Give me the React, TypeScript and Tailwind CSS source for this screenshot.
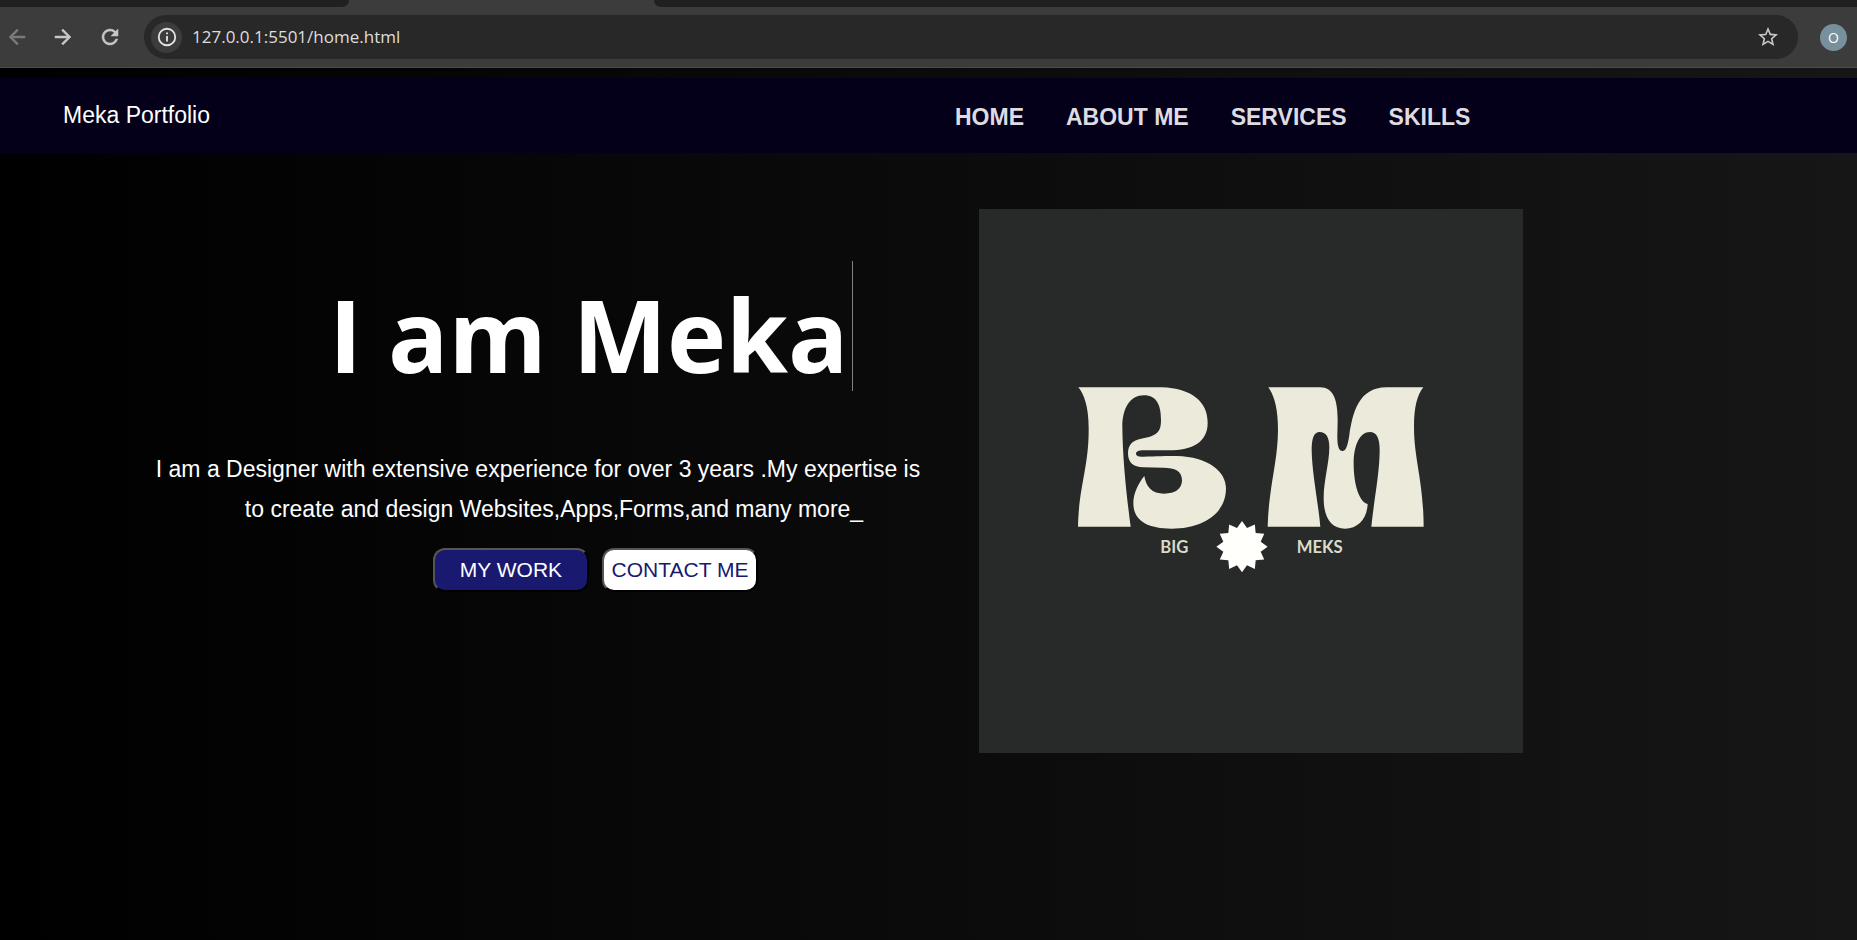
import React from "react";

const navLinks = ["HOME", "ABOUT ME", "SERVICES", "SKILLS"];

const starPoints = Array.from({ length: 24 }, (_, i) => {
  const radius = i % 2 === 0 ? 77 : 58;
  const angle = (i * Math.PI) / 12;
  return `${789 + radius * Math.sin(angle)},${1013 - radius * Math.cos(angle)}`;
}).join(" ");

function BrowserBar() {
  return (
    <header className="bg-[#3c3c3c] font-['Open_Sans','Noto_Sans',sans-serif]">
      <div className="flex h-[7px] justify-between">
        <div className="w-[349px] rounded-br-[14px] bg-[#1f2120]" />
        <div className="ml-[305px] flex-1 rounded-bl-[14px] bg-[#1f2120]" />
      </div>
      <div className="flex h-[61px] items-center border-b border-[#4a4a4a] pt-2 pr-[10px] pb-2">
        <button type="button" aria-label="Back" className="ml-[5px] flex size-6 items-center justify-center text-[#7b7b7b]">
          <svg viewBox="0 0 24 24" className="size-6" fill="currentColor" stroke="currentColor" strokeWidth="0.5">
            <path d="M20 11H7.83l5.59-5.59L12 4l-8 8 8 8 1.41-1.41L7.83 13H20v-2z" />
          </svg>
        </button>
        <button type="button" aria-label="Forward" className="ml-[22px] flex size-6 items-center justify-center text-[#c7c7c7]">
          <svg viewBox="0 0 24 24" className="size-6" fill="currentColor" stroke="currentColor" strokeWidth="0.5">
            <path d="m12 4-1.41 1.41L16.17 11H4v2h12.17l-5.58 5.59L12 20l8-8z" />
          </svg>
        </button>
        <button type="button" aria-label="Reload" className="ml-[23px] flex size-6 items-center justify-center text-[#c7c7c7]">
          <svg viewBox="0 0 24 24" className="size-6" fill="currentColor" stroke="currentColor" strokeWidth="0.5">
            <path d="M17.65 6.35A7.96 7.96 0 0 0 12 4a8 8 0 1 0 7.73 10h-2.08A6 6 0 1 1 12 6c1.66 0 3.14.69 4.22 1.78L13 11h7V4z" />
          </svg>
        </button>
        <div className="ml-[22px] flex h-11 flex-1 items-center rounded-full bg-[#282828] pr-[18px] pl-[7px]">
          <button type="button" aria-label="Site information" className="flex size-[31px] items-center justify-center rounded-full bg-[#3c3c3c] text-[#e3e3e3]">
            <svg viewBox="0 0 24 24" className="size-[22px]" fill="currentColor">
              <path d="M11 7h2v2h-2zm0 4h2v6h-2zm1-9a10 10 0 1 0 0 20 10 10 0 0 0 0-20m0 18a8 8 0 1 1 0-16 8 8 0 0 1 0 16" />
            </svg>
          </button>
          <input
            aria-label="Address"
            className="ml-[10px] min-w-0 flex-1 bg-transparent text-[17px] text-[#dedede] outline-none"
            defaultValue="127.0.0.1:5501/home.html"
          />
          <button type="button" aria-label="Bookmark this page" className="flex size-6 items-center justify-center text-[#c7c7c7]">
            <svg viewBox="0 0 24 24" className="size-6" fill="currentColor">
              <path d="M22 9.24l-7.19-.62L12 2 9.19 8.63 2 9.24l5.46 4.73L5.82 21 12 17.27 18.18 21l-1.63-7.03zM12 15.4l-3.76 2.27 1-4.28-3.32-2.88 4.38-.38L12 6.1l1.71 4.04 4.38.38-3.32 2.88 1 4.28z" />
            </svg>
          </button>
        </div>
        <button type="button" aria-label="Profile" className="ml-[22px] flex size-[27px] items-center justify-center rounded-full bg-[#78909c] text-[14px] text-white">
          O
        </button>
      </div>
    </header>
  );
}

function Logo() {
  return (
    <svg viewBox="0 0 1632 1632" role="img" aria-label="Big Meks logo" className="aspect-square w-full max-w-[544px] bg-[#282a29]">
      <g fill="#ebeadb">
        <path
          transform="translate(243 483)"
          d="M55 52H305C395 55 443 95 443 158C443 215 400 241 325 241H250C235 241 228 246 228 251C228 258 236 261 250 260C290 259 320 258 350 258C445 260 498 305 498 355C498 430 430 476 335 476C260 476 220 450 220 400C220 370 235 340 253 318C258 350 275 371 313 371C345 371 366 357 366 331C366 303 345 293 310 293L250 292C220 291 204 278 204 250C204 225 218 211 240 207L270 200C295 192 303 180 303 150C303 105 290 76 252 76C210 76 187 115 187 170C188 270 200 380 212 470H54C56 350 87 290 86 175C86 110 72 72 55 52Z"
        />
        <path
          transform="translate(753 483)"
          d="M115 52H270C310 52 323 90 323 150L322 200C322 225 326 243 337 243C350 243 354 220 358 195C368 130 385 52 470 52H580C562 75 552 110 552 170C552 270 580 330 581 470H424C432 390 449 310 449 240C449 205 440 186 420 186C390 186 371 225 371 280C371 350 390 398 413 402C411 445 385 476 345 476C305 476 281 445 281 385C281 330 298 280 298 230C298 200 287 186 269 186C252 186 245 205 245 240C246 310 265 400 271 470H113C116 350 143 280 144 180C144 115 132 75 115 52Z"
        />
      </g>
      <polygon points={starPoints} fill="#fffffb" />
      <g fill="#dcdbca" fontFamily="Lato, sans-serif" fontWeight="700" fontSize="50" textAnchor="middle">
        <text x="586" y="1031">BIG</text>
        <text x="1022" y="1031">MEKS</text>
      </g>
    </svg>
  );
}

export default function App() {
  return (
    <div className="flex min-h-screen flex-col bg-[linear-gradient(to_right,#000000,#161616)] font-['Liberation_Sans',Arial,sans-serif] text-white">
      <BrowserBar />
      <nav className="mt-[10px] grid h-[75px] grid-cols-[955fr_902fr] items-center bg-[#05001a] pb-0.5 text-[23px] leading-8">
        <a href="#top" className="justify-self-start pl-[63px]">
          Meka Portfolio
        </a>
        <ul className="flex gap-[42px] pt-1 font-bold text-[#dedbe2]">
          {navLinks.map((label) => (
            <li key={label}>
              <a href="#top">{label}</a>
            </li>
          ))}
        </ul>
      </nav>
      <main className="grid grid-cols-[979fr_878fr] pt-14">
        <section className="pt-[52px] pl-[148px]">
          <h1 className="ml-[181px] w-fit border-r border-[#808080] pt-4 pr-1 font-['Open_Sans','Noto_Sans',sans-serif] text-[100px] leading-[114px] font-bold whitespace-nowrap">
            I am Meka
          </h1>
          <p className="mt-[58px] w-[780px] text-center text-[23px] leading-10 whitespace-nowrap">
            <span className="block">I am a Designer with extensive experience for over 3 years .My expertise is</span>
            <span className="block pl-8">to create and design Websites,Apps,Forms,and many more_</span>
          </p>
          <div className="mt-[19px] ml-[285px] flex gap-[13px] text-[21px]">
            <button type="button" className="h-11 w-[156px] rounded-xl border-2 border-t-[#555555] border-r-black border-b-black border-l-[#555555] bg-[#191970] whitespace-nowrap">
              MY WORK
            </button>
            <button type="button" className="h-11 w-[156px] rounded-xl border-2 border-t-[#555555] border-r-black border-b-black border-l-[#555555] bg-white whitespace-nowrap text-[#191970]">
              CONTACT ME
            </button>
          </div>
        </section>
        <Logo />
      </main>
    </div>
  );
}
